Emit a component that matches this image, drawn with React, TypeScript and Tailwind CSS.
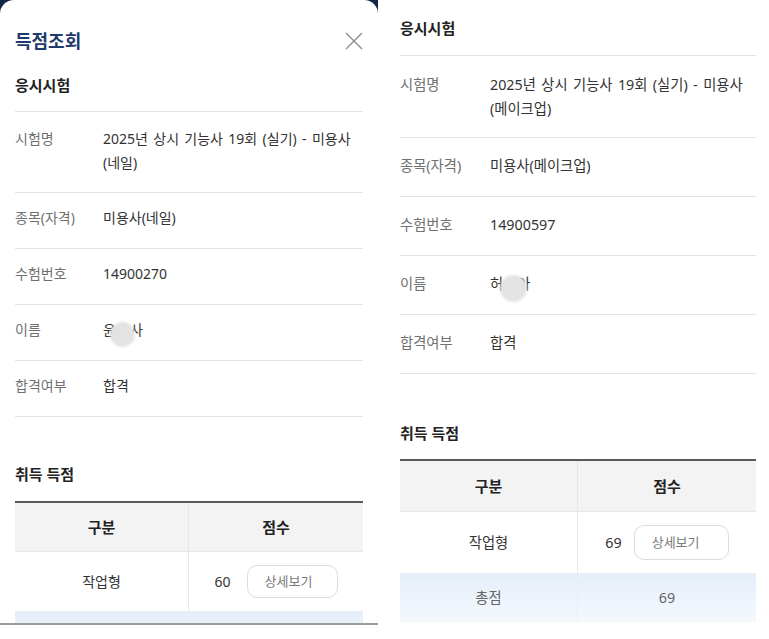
import React from 'react'

const font = "font-['Noto_Sans','Noto_Sans_CJK_KR',sans-serif]"

type Row = { label: string; value: React.ReactNode }

function CloseIcon() {
  return (
    <svg width="18" height="18" viewBox="0 0 18 18" fill="none" stroke="#8c8c8c" strokeWidth="1.4">
      <path d="M1 1l16 16M17 1L1 17" />
    </svg>
  )
}

// name with the middle syllable hidden under a grey dot
function MaskedName({ first, last, dotCls }: { first: string; last: string; dotCls: string }) {
  return (
    <span className="relative inline-flex">
      <span>{first}</span>
      <span className="inline-block w-[14px]" />
      <span>{last}</span>
      <span className={dotCls} />
    </span>
  )
}

function InfoRows({ rows, rowCls, firstCls, labelCls }: { rows: Row[]; rowCls: string; firstCls: string; labelCls: string }) {
  return (
    <div>
      {rows.map((r, i) => (
        <div key={r.label} className={`flex border-b border-[#e3e3e3] leading-[24px] ${i === 0 ? firstCls : rowCls}`}>
          <div className={labelCls}>{r.label}</div>
          <div className="text-[#333] [word-spacing:1.7px]">{r.value}</div>
        </div>
      ))}
    </div>
  )
}

function ScoreTable({
  score,
  headCls,
  rowCls,
  totalCls,
  btnCls,
  gapCls,
  showTotal = true,
}: {
  score: string
  headCls: string
  rowCls: string
  totalCls: string
  btnCls: string
  gapCls: string
  showTotal?: boolean
}) {
  return (
    <div className="border-t-2 border-[#595959]">
      <div className={`grid grid-cols-2 border-b border-[#e6e6e6] bg-[#f3f3f3] font-bold text-[#222] ${headCls}`}>
        <div className="flex items-center justify-center border-r border-[#e6e6e6]">구분</div>
        <div className="flex items-center justify-center">점수</div>
      </div>
      <div className={`grid grid-cols-2 text-[#333] ${rowCls}`}>
        <div className="flex items-center justify-center border-r border-[#e6e6e6]">작업형</div>
        <div className={`flex items-center justify-center ${gapCls}`}>
          <span>{score}</span>
          <button className={`flex items-center rounded-[10px] border border-[#dcdcdc] bg-white pl-[17px] text-[13px] text-[#7a7a7a] ${btnCls}`}>
            상세보기
          </button>
        </div>
      </div>
      <div className={`grid grid-cols-2 bg-gradient-to-b from-[#e5eef9] to-[#f5f9fe] text-[#666] ${totalCls}`}>
        <div className="flex items-center justify-center border-r border-[#e8eef5]">{showTotal && '총점'}</div>
        <div className="flex items-center justify-center">{showTotal && score}</div>
      </div>
    </div>
  )
}

export default function App() {
  const leftRows: Row[] = [
    { label: '시험명', value: <>2025년 상시 기능사 19회 (실기) - 미용사<br />(네일)</> },
    { label: '종목(자격)', value: '미용사(네일)' },
    { label: '수험번호', value: '14900270' },
    {
      label: '이름',
      value: (
        <MaskedName
          first="윤"
          last="사"
          dotCls="absolute left-[7px] top-[4px] h-[25px] w-[25px] rounded-full bg-[#e3e3e3] blur-[1px]"
        />
      ),
    },
    { label: '합격여부', value: '합격' },
  ]

  const rightRows: Row[] = [
    { label: '시험명', value: <>2025년 상시 기능사 19회 (실기) - 미용사<br />(메이크업)</> },
    { label: '종목(자격)', value: '미용사(메이크업)' },
    { label: '수험번호', value: '14900597' },
    {
      label: '이름',
      value: (
        <MaskedName
          first="허"
          last="아"
          dotCls="absolute left-[10px] top-[3px] h-[27px] w-[27px] rounded-full bg-[#e3e3e3] blur-[1px]"
        />
      ),
    },
    { label: '합격여부', value: '합격' },
  ]

  return (
    <div className={`flex h-[639px] w-[769px] gap-[2px] overflow-hidden bg-white ${font}`}>
      {/* left: score lookup modal */}
      <div className="h-[625px] w-[378px] shrink-0 bg-[#13264a]">
        <div className="h-[625px] overflow-hidden rounded-t-[14px] border-b-2 border-[#9c9c9c] bg-white px-[15px] pt-[26px] text-[14px]">
          <div className="flex h-[30px] items-center justify-between">
            <h1 className="text-[18px] font-bold leading-[30px] text-[#1f3b6d]">득점조회</h1>
            <CloseIcon />
          </div>
          <h2 className="border-b border-[#e3e3e3] pb-[12px] pt-[15px] text-[15px] font-bold leading-[28px] text-[#222]">
            응시시험
          </h2>
          <InfoRows
            rows={leftRows}
            firstCls="pt-[15px] pb-[17px]"
            rowCls="pt-[13px] pb-[18px]"
            labelCls="w-[88px] shrink-0 text-[#707070]"
          />
          <h2 className="mb-[13px] mt-[43px] text-[15px] font-bold leading-[28px] text-[#222]">취득 득점</h2>
          <ScoreTable
            score="60"
            headCls="h-[49px] text-[15px]"
            rowCls="h-[59px]"
            totalCls="h-[49px]"
            btnCls="h-[33px] w-[91px]"
            gapCls="gap-[16px]"
            showTotal={false}
          />
        </div>
      </div>

      {/* right: the same page scrolled */}
      <div className="flex-1 bg-white pl-[20px] pr-[13px] text-[14.3px]">
        <h2 className="border-b border-[#e3e3e3] pb-[13px] pt-[14px] text-[15px] font-bold leading-[28px] text-[#222]">
          응시시험
        </h2>
        <InfoRows
          rows={rightRows}
          firstCls="pt-[17px] pb-[16px]"
          rowCls="pt-[16px] pb-[18px]"
          labelCls="w-[90px] shrink-0 text-[#707070]"
        />
        <h2 className="mb-[12px] mt-[45px] text-[15px] font-bold leading-[28px] text-[#222]">취득 득점</h2>
        <ScoreTable
          score="69"
          headCls="h-[51px] text-[15px]"
          rowCls="h-[61px]"
          totalCls="h-[49px]"
          btnCls="h-[35px] w-[95px]"
          gapCls="gap-[12px]"
        />
      </div>
    </div>
  )
}
